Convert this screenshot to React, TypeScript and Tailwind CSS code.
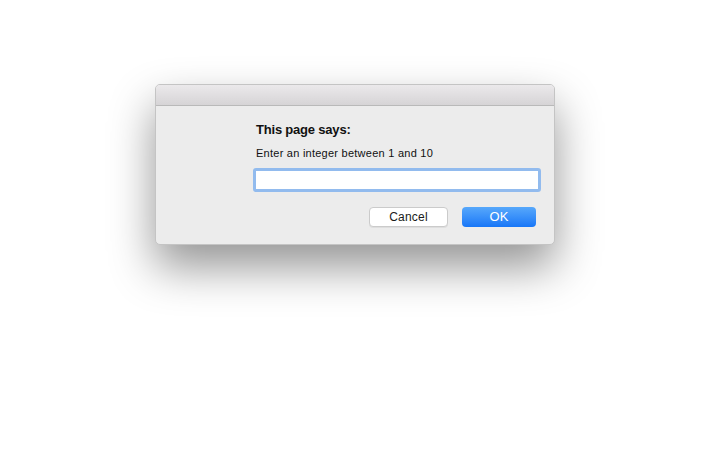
import React from "react";

export default function App() {
  return (
    <div className="w-[720px] h-[450px] bg-white pt-[84px] pl-[155px]" style={{ fontFamily: '"Liberation Sans", Arial, sans-serif' }}>
      <div className="w-[400px] h-[161px] rounded-[5px] overflow-hidden bg-[#ececec] border border-[#c4c4c4] shadow-[0_22px_45px_rgba(0,0,0,0.42)] flex flex-col">
        <div className="h-[21px] shrink-0 bg-gradient-to-b from-[#ebe9eb] to-[#d6d4d6] border-b border-[#b9b9b9]" />
        <div className="pl-[100px] pr-[13px] pt-[16px] flex flex-col">
          <div className="text-[13px] leading-[16px] font-bold tracking-[-0.2px] text-[#111]">This page says:</div>
          <div className="mt-[8px] text-[11px] leading-[14px] tracking-[0.25px] text-[#111]">Enter an integer between 1 and 10</div>
          <div className="mt-[8px] -ml-[3px] h-[24px] rounded-[3px] border-[3px] border-[#92bbee] bg-white" />
          <div className="mt-[15px] flex justify-end gap-[14px] pr-[5px]">
            <button className="w-[79px] h-[20px] rounded-[4px] bg-white border border-[#cbcbcb] shadow-[0_1px_0_rgba(0,0,0,0.06)] text-[12px] leading-[18px] tracking-[0.2px] text-[#1a1a1a]">Cancel</button>
            <button className="w-[74px] h-[20px] rounded-[4px] bg-gradient-to-b from-[#57a8fb] to-[#1676f7] text-[13px] leading-[20px] text-white">OK</button>
          </div>
        </div>
      </div>
    </div>
  );
}
